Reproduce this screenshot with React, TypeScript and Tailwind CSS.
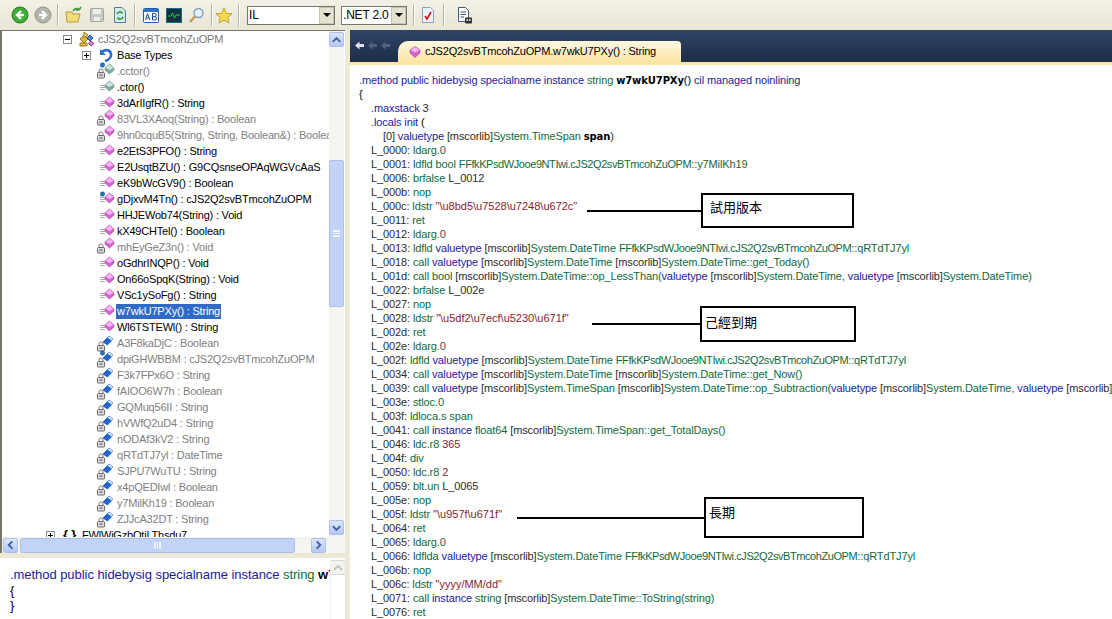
import React from 'react';

const ui = { fontFamily: '"Liberation Sans", Arial, sans-serif' };
const cjk = { fontFamily: '"Noto Sans CJK TC", "Liberation Sans", sans-serif' };
const heavy = { fontFamily: '"DejaVu Sans", Verdana, sans-serif' };

type Kind = 'method' | 'static' | 'lockMethod' | 'ctor' | 'lockCtor' | 'field' | 'staticField';

const members: { name: string; kind: Kind; dim?: boolean; selected?: boolean }[] = [
  { name: '.cctor()', kind: 'lockCtor', dim: true },
  { name: '.ctor()', kind: 'ctor' },
  { name: '3dArIIgfR() : String', kind: 'method' },
  { name: '83VL3XAoq(String) : Boolean', kind: 'lockMethod', dim: true },
  { name: '9hn0cquB5(String, String, Boolean&) : Boolean', kind: 'lockMethod', dim: true },
  { name: 'e2EtS3PFO() : String', kind: 'method' },
  { name: 'E2UsqtBZU() : G9CQsnseOPAqWGVcAaS', kind: 'method' },
  { name: 'eK9bWcGV9() : Boolean', kind: 'method' },
  { name: 'gDjxvM4Tn() : cJS2Q2svBTmcohZuOPM', kind: 'static' },
  { name: 'HHJEWob74(String) : Void', kind: 'method' },
  { name: 'kX49CHTel() : Boolean', kind: 'method' },
  { name: 'mhEyGeZ3n() : Void', kind: 'lockMethod', dim: true },
  { name: 'oGdhrINQP() : Void', kind: 'method' },
  { name: 'On66oSpqK(String) : Void', kind: 'method' },
  { name: 'VSc1ySoFg() : String', kind: 'method' },
  { name: 'w7wkU7PXy() : String', kind: 'method', selected: true },
  { name: 'Wl6TSTEWl() : String', kind: 'method' },
  { name: 'A3F8kaDjC : Boolean', kind: 'field', dim: true },
  { name: 'dpiGHWBBM : cJS2Q2svBTmcohZuOPM', kind: 'staticField', dim: true },
  { name: 'F3k7FPx6O : String', kind: 'field', dim: true },
  { name: 'fAIOO6W7h : Boolean', kind: 'field', dim: true },
  { name: 'GQMuq56II : String', kind: 'field', dim: true },
  { name: 'hVWfQ2uD4 : String', kind: 'field', dim: true },
  { name: 'nODAf3kV2 : String', kind: 'field', dim: true },
  { name: 'qRTdTJ7yl : DateTime', kind: 'field', dim: true },
  { name: 'SJPU7WuTU : String', kind: 'field', dim: true },
  { name: 'x4pQEDIwl : Boolean', kind: 'field', dim: true },
  { name: 'y7MilKh19 : Boolean', kind: 'field', dim: true },
  { name: 'ZJJcA32DT : String', kind: 'field', dim: true },
];

const ffk = 'FFfkKPsdWJooe9NTIwi.cJS2Q2svBTmcohZuOPM';
const dt = '[mscorlib]System.DateTime';

const code = [
  'L_0000: ldarg.0',
  `L_0001: ldfld bool ${ffk}::y7MilKh19`,
  'L_0006: brfalse L_0012',
  'L_000b: nop',
  'L_000c: ldstr "\\u8bd5\\u7528\\u7248\\u672c"',
  'L_0011: ret',
  'L_0012: ldarg.0',
  `L_0013: ldfld valuetype ${dt} ${ffk}::qRTdTJ7yl`,
  `L_0018: call valuetype ${dt} ${dt}::get_Today()`,
  `L_001d: call bool ${dt}::op_LessThan(valuetype ${dt}, valuetype ${dt})`,
  'L_0022: brfalse L_002e',
  'L_0027: nop',
  'L_0028: ldstr "\\u5df2\\u7ecf\\u5230\\u671f"',
  'L_002d: ret',
  'L_002e: ldarg.0',
  `L_002f: ldfld valuetype ${dt} ${ffk}::qRTdTJ7yl`,
  `L_0034: call valuetype ${dt} ${dt}::get_Now()`,
  `L_0039: call valuetype [mscorlib]System.TimeSpan ${dt}::op_Subtraction(valuetype ${dt}, valuetype ${dt})`,
  'L_003e: stloc.0',
  'L_003f: ldloca.s span',
  'L_0041: call instance float64 [mscorlib]System.TimeSpan::get_TotalDays()',
  'L_0046: ldc.r8 365',
  'L_004f: div',
  'L_0050: ldc.r8 2',
  'L_0059: blt.un L_0065',
  'L_005e: nop',
  'L_005f: ldstr "\\u957f\\u671f"',
  'L_0064: ret',
  'L_0065: ldarg.0',
  `L_0066: ldflda valuetype ${dt} ${ffk}::qRTdTJ7yl`,
  'L_006b: nop',
  'L_006c: ldstr "yyyy/MM/dd"',
  'L_0071: call instance string [mscorlib]System.DateTime::ToString(string)',
  'L_0076: ret',
];

// colour one IL line the way the disassembler does
function CodeLine({ text }: { text: string }) {
  const parts = text.split(/(L_[0-9a-f]{4}:?|valuetype|instance|"[^"]*"|\[mscorlib\]|FFfkKPsdWJooe9NTIwi\.cJS2Q2svBTmcohZuOPM| 365$| 2$)/).filter(Boolean);
  return (
    <div className="h-[14px] whitespace-pre text-[#0f6a3c]">
      {parts.map((p, i) => {
        if (/^L_/.test(p) || p === '[mscorlib]') return <span key={i} className="text-[#2c2c2c]">{p}</span>;
        if (p === 'valuetype' || p === 'instance') return <span key={i} className="text-[#1d1a9c]">{p}</span>;
        if (p === ffk) return <span key={i} className="tracking-[-0.42px]">{p}</span>;
        if (p[0] === '"') return <span key={i} className="tracking-normal text-[#8a1c2c]">{p}</span>;
        if (p === ' 365' || p === ' 2') return <span key={i} className="text-[#8a1c2c]">{p}</span>;
        return <span key={i}>{p}</span>;
      })}
    </div>
  );
}

function Gem({ x, y, teal }: { x: number; y: number; teal?: boolean }) {
  const a = teal ? '#7fa9a0' : '#d65fd2';
  const b = teal ? '#4c7f78' : '#8f2f9e';
  const c = teal ? '#cfe3de' : '#f3b5f0';
  return (
    <g>
      <path d={`M${x} ${y + 4}L${x + 4.5} ${y}L${x + 9} ${y + 4}L${x + 9} ${y + 6}L${x + 4.5} ${y + 10}L${x} ${y + 6}Z`} fill={a} stroke={b} strokeWidth="0.5" />
      <path d={`M${x + 0.5} ${y + 4}L${x + 4.5} ${y + 0.5}L${x + 8.5} ${y + 4}L${x + 4.5} ${y + 6}Z`} fill={c} />
    </g>
  );
}

function Lock({ y }: { y: number }) {
  return (
    <g>
      <path d={`M2 ${y + 3.5}V${y + 2}a2 2 0 0 1 4 0V${y + 3.5}`} fill="none" stroke="#777" />
      <rect x="0.5" y={y + 3.5} width="7" height="5.5" rx="1" fill="#dcdcdc" stroke="#666" />
      <path d={`M2.5 ${y + 6}H5.5`} stroke="#444" />
    </g>
  );
}

function Bars() {
  return <path d="M3 6.5H8M3 8.5H8M3 10.5H8" stroke="#ababab" fill="none" />;
}

function Dot({ y }: { y: number }) {
  return <circle cx="5.5" cy={y} r="2.2" fill="#1f77c9" stroke="#0a3d7a" strokeWidth="0.5" />;
}

function FieldGem() {
  return (
    <g>
      <path d="M6 7L12 1L16 4L10.5 10Z" fill="#1f66cf" stroke="#0d3f94" strokeWidth="0.6" />
      <path d="M12 1L16 4L14.5 5.5L10.5 2.8Z" fill="#cfe3fa" />
    </g>
  );
}

function MemberIcon({ kind }: { kind: Kind }) {
  return (
    <svg width="18" height="16" viewBox="0 0 18 16" className="shrink-0 overflow-visible">
      {kind === 'method' && <><Bars /><Gem x={8} y={2} /></>}
      {kind === 'static' && <><Bars /><Dot y={3} /><Gem x={8} y={2} /></>}
      {kind === 'lockMethod' && <><Lock y={5} /><Gem x={8} y={-1} /></>}
      {kind === 'ctor' && <><Bars /><Gem x={8} y={2} teal /></>}
      {kind === 'lockCtor' && <><Lock y={6} /><Dot y={2} /><Gem x={8} y={1} teal /></>}
      {kind === 'field' && <><Lock y={7} /><FieldGem /></>}
      {kind === 'staticField' && <><Lock y={7} /><Dot y={2} /><FieldGem /></>}
    </svg>
  );
}

function Expander({ open }: { open?: boolean }) {
  return (
    <span className="relative block h-[9px] w-[9px] shrink-0 border border-[#8a8a8a] bg-white">
      <span className="absolute left-[1px] top-[3px] h-px w-[5px] bg-black" />
      {!open && <span className="absolute left-[3px] top-[1px] h-[5px] w-px bg-black" />}
    </span>
  );
}

function ScrollBtn({ dir }: { dir: 'up' | 'down' | 'left' | 'right' }) {
  const d = { up: 'M3 9L7 5L11 9', down: 'M3 5L7 9L11 5', left: 'M9 3L5 7L9 11', right: 'M5 3L9 7L5 11' }[dir];
  return (
    <div className="flex h-[15px] w-[15px] shrink-0 items-center justify-center rounded-[2px] border border-[#aebfe8] bg-gradient-to-b from-[#dbe6fb] to-[#b4c9f2]">
      <svg width="14" height="14" viewBox="0 0 14 14"><path d={d} fill="none" stroke="#3f5f9f" strokeWidth="2" /></svg>
    </div>
  );
}

function Sep() {
  return <div className="mx-[3px] h-[22px] w-[2px] shrink-0 border-l border-r border-l-[#b5b2a0] border-r-white" />;
}

function Tool({ children, w = 23 }: { children: React.ReactNode; w?: number }) {
  return <div className="flex h-[24px] shrink-0 items-center justify-center" style={{ width: w }}>{children}</div>;
}

function Combo({ label, w }: { label: string; w: string }) {
  return (
    <div className={`flex h-[19px] shrink-0 items-center justify-between border border-[#77756a] bg-white pl-[1px] text-[12px] text-black ${w}`}>
      <span className="whitespace-nowrap tracking-[-0.2px]">{label}</span>
      <div className="flex h-[17px] w-[15px] shrink-0 items-center justify-center border border-[#c5c2b2] bg-[#e5e2d3]">
        <div className="h-0 w-0 border-x-[4px] border-t-[4px] border-x-transparent border-t-black" />
      </div>
    </div>
  );
}

function Toolbar() {
  return (
    <div className="flex h-[30px] shrink-0 items-center bg-gradient-to-b from-[#f3f1e6] to-[#e9e6d6] pl-[8px]" style={ui}>
      <Tool>
        <svg width="18" height="18" viewBox="0 0 18 18"><circle cx="9" cy="9" r="8" fill="#3fae35" stroke="#2a7d25" /><path d="M10 5L6 9L10 13M6 9H13" stroke="#fff" strokeWidth="2.4" fill="none" /></svg>
      </Tool>
      <Tool>
        <svg width="18" height="18" viewBox="0 0 18 18"><circle cx="9" cy="9" r="8" fill="#b4b4ac" stroke="#96968f" /><path d="M8 5L12 9L8 13M12 9H5" stroke="#fff" strokeWidth="2.4" fill="none" /></svg>
      </Tool>
      <Sep />
      <Tool>
        <svg width="18" height="18" viewBox="0 0 18 18"><path d="M1 6H7L8 8H15L13 16H2Z" fill="#f4dc7c" stroke="#b89a3a" /><path d="M8 5C10 2 13 2 14 4M14 4L16 1M14 4L11 4" stroke="#3a9d35" strokeWidth="1.6" fill="none" /></svg>
      </Tool>
      <Tool>
        <svg width="16" height="16" viewBox="0 0 16 16"><rect x="1.5" y="1.5" width="13" height="13" rx="1" fill="#c9c9c3" stroke="#a5a59f" /><rect x="4" y="2" width="8" height="5" fill="#efefea" /><rect x="5" y="10" width="6" height="4" fill="#efefea" /></svg>
      </Tool>
      <Tool>
        <svg width="14" height="16" viewBox="0 0 14 16"><path d="M1.5 .5H9L12.5 4V15.5H1.5Z" fill="#d5ebf2" stroke="#5a7c90" /><path d="M4 7A3 3 0 0 1 9.5 6.5M10 10A3 3 0 0 1 4.5 10.5" stroke="#2f9c30" strokeWidth="1.6" fill="none" /></svg>
      </Tool>
      <Sep />
      <Tool>
        <svg width="16" height="15" viewBox="0 0 16 15"><rect x=".5" y=".5" width="15" height="14" rx="1" fill="#fff" stroke="#1c5db0" /><rect x="1" y="1" width="14" height="3" fill="#2f73c8" /><path d="M2.5 12L4.6 5.5L6.7 12M3.3 10H5.9" stroke="#1a4f9e" fill="none" /><path d="M9.5 5.5V12H12a1.6 1.6 0 0 0 0-3.3H9.5M9.5 5.5H11.7a1.6 1.6 0 0 1 0 3.2" stroke="#1a4f9e" fill="none" /></svg>
      </Tool>
      <Tool>
        <svg width="16" height="15" viewBox="0 0 16 15"><rect x=".5" y=".5" width="15" height="14" fill="#14323e" stroke="#1a6b8d" /><path d="M2 8H5L6.5 5L8.5 10L10 7H14" stroke="#37c14d" fill="none" /></svg>
      </Tool>
      <Tool>
        <svg width="17" height="17" viewBox="0 0 17 17"><circle cx="10.5" cy="6" r="4.5" fill="#e5f2fb" stroke="#7c9db8" strokeWidth="1.4" /><path d="M7 9.5L2 15" stroke="#c49a55" strokeWidth="2.4" /></svg>
      </Tool>
      <Sep />
      <Tool w={16}>
        <svg width="18" height="17" viewBox="0 0 18 17" className="shrink-0"><path d="M9 1L11.3 6.3L17 6.8L12.7 10.5L14 16L9 13.1L4 16L5.3 10.5L1 6.8L6.7 6.3Z" fill="#f8d84e" stroke="#c79f2c" /></svg>
      </Tool>
      <div className="w-[3px] shrink-0" />
      <Sep />
      <div className="w-[4px] shrink-0" />
      <Combo label="IL" w="w-[88px]" />
      <div className="w-[6px] shrink-0" />
      <Combo label=".NET 2.0" w="w-[66px]" />
      <div className="w-[3px] shrink-0" />
      <Sep />
      <div className="w-[2px] shrink-0" />
      <Tool w={16}>
        <svg width="14" height="16" viewBox="0 0 14 16"><path d="M1.5 .5H9.5L12.5 3.5V15.5H1.5Z" fill="#eef3fa" stroke="#8ba0bd" /><path d="M4 9L6 12L10 5" stroke="#d6232a" strokeWidth="1.8" fill="none" /></svg>
      </Tool>
      <div className="w-[4px] shrink-0" />
      <Sep />
      <div className="w-[9px] shrink-0" />
      <Tool w={16}>
        <svg width="16" height="17" viewBox="0 0 16 17"><path d="M1.5 .5H8.5L11.5 3.5V14.5H1.5Z" fill="#fff" stroke="#3a5a80" /><path d="M3.5 5H9M3.5 7.5H9M3.5 10H7" stroke="#3a5a80" /><rect x="8" y="10.5" width="7" height="6" rx="1" fill="#333" /><rect x="9.5" y="12" width="1.5" height="2" fill="#ddd" /><rect x="12" y="12" width="1.5" height="2" fill="#ddd" /></svg>
      </Tool>
    </div>
  );
}

function TreePane() {
  return (
    <div className="flex h-[507px] shrink-0 border-l-2 border-t border-[#77756a] bg-white" style={ui}>
      <div className="min-w-0 flex-1 overflow-hidden text-[11px] tracking-[-0.2px]">
        <div className="flex h-[16px] items-center text-[#777]">
          <div className="w-[61px]" />
          <Expander open />
          <svg width="17" height="16" viewBox="0 0 17 16" className="ml-[7px] shrink-0">
            <path d="M1 8L5 4L9 8L5 12Z" fill="#e0b93e" stroke="#9a7a1c" />
            <path d="M5 1L9 4L5 7Z" fill="#f2d777" stroke="#9a7a1c" />
            <path d="M1 12H8V15H1Z" fill="#e0b93e" stroke="#9a7a1c" />
            <path d="M11 4L14 7L11 10L8 7Z" fill="#4a86d8" stroke="#1f4d9a" />
            <path d="M12 10L15 12.5L12 15L9.5 12.5Z" fill="#dc7fd8" stroke="#8c3a96" />
          </svg>
          <span className="ml-[2px] whitespace-nowrap">cJS2Q2svBTmcohZuOPM</span>
        </div>
        <div className="flex h-[16px] items-center text-black">
          <div className="w-[80px]" />
          <Expander />
          <svg width="14" height="14" viewBox="0 0 14 14" className="ml-[8px] shrink-0">
            <path d="M2 5C5 1 11 1 12 6C12.5 9 10 12 6 13" fill="none" stroke="#2d6fd0" strokeWidth="2.6" />
            <path d="M1 1V7H7Z" fill="#2d6fd0" />
          </svg>
          <span className="ml-[4px] whitespace-nowrap">Base Types</span>
        </div>
        {members.map((m) => (
          <div key={m.name} className="flex h-[16px] items-center whitespace-nowrap">
            <div className="w-[95px] shrink-0" />
            <MemberIcon kind={m.kind} />
            <span className={`ml-[1px] px-[1px] leading-[15px] ${m.selected ? 'bg-[#316ac5] text-white' : m.dim ? 'text-[#808080]' : 'text-black'}`}>{m.name}</span>
          </div>
        ))}
        <div className="flex h-[16px] items-center whitespace-nowrap text-black">
          <div className="w-[44px]" />
          <Expander />
          <span className="ml-[8px] w-[14px] text-[13px] font-bold">{'{ }'}</span>
          <span className="ml-[5px]">FWlWiGzbOtiLThsdu7</span>
        </div>
      </div>
      <div className="mr-[1px] flex w-[15px] shrink-0 flex-col bg-[#f5f4ef] pb-[2px] pt-[1px]">
        <ScrollBtn dir="up" />
        <div className="h-[113px] shrink-0" />
        <div className="flex h-[147px] shrink-0 items-center justify-center rounded-[2px] border border-[#aebfe8] bg-[#c3d3f5]">
          <div className="h-[7px] w-[7px] border-y-2 border-[#eef3fd] bg-[linear-gradient(#eef3fd,#eef3fd)] bg-[length:100%_1px] bg-center bg-no-repeat" />
        </div>
        <div className="flex-1" />
        <ScrollBtn dir="down" />
      </div>
    </div>
  );
}

function HScroll() {
  return (
    <div className="flex h-[16px] shrink-0 items-center border-l-2 border-[#77756a] bg-[#f5f4ef] pl-[1px] pr-[19px]">
      <ScrollBtn dir="left" />
      <div className="mx-[2px] flex h-[15px] w-[275px] shrink-0 items-center justify-center rounded-[2px] border border-[#aebfe8] bg-[#c3d3f5]">
        <div className="h-[7px] w-[7px] border-x-2 border-[#eef3fd] bg-[linear-gradient(#eef3fd,#eef3fd)] bg-[length:1px_100%] bg-center bg-no-repeat" />
      </div>
      <div className="flex-1" />
      <ScrollBtn dir="right" />
    </div>
  );
}

function PreviewPane() {
  return (
    <div className="mt-[5px] flex min-h-0 flex-1 bg-white" style={ui}>
      <div className="min-w-0 flex-1 overflow-hidden whitespace-nowrap pl-[10px] pt-[9px] text-[13px] leading-[15.5px] tracking-[-0.05px] text-black">
        <div>
          <span className="text-[#1d1a9c]">.method public hidebysig specialname instance </span>
          <span className="text-[#0f6a3c]">string </span>
          <span className="font-bold">w7wkU7PXy</span>
        </div>
        <div>{'{'}</div>
        <div>{'}'}</div>
      </div>
      <div className="w-[15px] shrink-0 border-l border-[#eeeeea] pt-[2px]">
        <div className="flex h-[15px] items-center justify-center border-y border-[#d8d8d2] bg-[#f3f3ee]">
          <svg width="10" height="8" viewBox="0 0 10 8"><path d="M1 6L5 2L9 6" fill="none" stroke="#c6c6c0" strokeWidth="2" /></svg>
        </div>
      </div>
    </div>
  );
}

function Note({ label, className, boxClass, lineClass }: { label: string; className: string; boxClass: string; lineClass: string }) {
  return (
    <div className={`absolute flex items-center ${className}`}>
      <div className={`h-[2px] bg-black ${lineClass}`} />
      <div className={`border-2 border-black bg-white text-[13px] leading-[18px] text-black ${boxClass}`} style={cjk}>{label}</div>
    </div>
  );
}

function NavArrow({ bright }: { bright?: boolean }) {
  return (
    <svg width="9" height="9" viewBox="0 0 9 9" className="shrink-0">
      <path d="M0 4.5L4.5 0.5V3H9V6H4.5V8.5Z" fill={bright ? '#dfe4ec' : '#51617f'} />
    </svg>
  );
}

function CodePane() {
  return (
    <div className="relative flex min-w-0 flex-1 flex-col overflow-hidden border-l border-[#f6ecc8] bg-white" style={ui}>
      <div className="flex h-[32px] shrink-0 items-end bg-gradient-to-b from-[#2f4465] to-[#1e2d48] pl-[5px]">
        <div className="mb-[12px] flex w-[43px] shrink-0 items-center gap-[4px]">
          <NavArrow bright />
          <NavArrow />
          <NavArrow />
        </div>
        <div className="flex h-[21px] w-[283px] shrink-0 items-center rounded-tl-[10px] rounded-tr-[4px] bg-gradient-to-b from-[#fff8e2] to-[#fbe5a4] pl-[11px] text-[11px] tracking-[-0.2px] text-black">
          <svg width="12" height="12" viewBox="0 0 12 12" className="mr-[4px] shrink-0">
            <path d="M1 4L6 .5L11 4V7L6 11.5L1 7Z" fill="#d65fd2" stroke="#8f2f9e" strokeWidth="0.5" />
            <path d="M1.5 4L6 1L10.5 4L6 6.5Z" fill="#f3b5f0" />
          </svg>
          <span className="whitespace-nowrap">cJS2Q2svBTmcohZuOPM.w7wkU7PXy() : String</span>
        </div>
      </div>
      <div className="h-[3px] shrink-0 bg-[#fbe5a4]" />
      <div className="min-h-0 flex-1 pl-[9px] pt-[8px] text-[11px] leading-[14px] tracking-[-0.11px]">
        <div className="h-[14px] whitespace-pre text-[#1d1a9c]">
          .method public hidebysig specialname instance <span className="text-[#0f6a3c]">string</span>{' '}
          <span className="text-[10px] font-bold text-black" style={heavy}>w7wkU7PXy</span><span className="text-black">()</span> cil managed noinlining
        </div>
        <div className="h-[14px] text-black">{'{'}</div>
        <div className="pl-[12px]">
          <div className="h-[14px] text-[#1d1a9c]">.maxstack <span className="text-[#2c2c2c]">3</span></div>
          <div className="h-[14px] text-[#1d1a9c]">.locals init <span className="text-black">(</span></div>
          <div className="h-[14px] whitespace-pre pl-[12px] text-[#2c2c2c]">
            [0] <span className="text-[#1d1a9c]">valuetype</span> [mscorlib]<span className="text-[#0f6a3c]">System.TimeSpan</span> <span className="text-[10px] font-bold text-black" style={heavy}>span</span>)
          </div>
          {code.map((line) => <CodeLine key={line} text={line} />)}
        </div>
      </div>
      <Note label="試用版本" className="left-[237px] top-[163px]" lineClass="w-[114px]" boxClass="h-[35px] w-[153px] pl-[7px] pt-[3px]" />
      <Note label="己經到期" className="left-[242px] top-[276px]" lineClass="w-[108px]" boxClass="h-[36px] w-[156px] pl-[3px] pt-[5px]" />
      <Note label="長期" className="left-[167px] top-[467px]" lineClass="w-[187px]" boxClass="h-[41px] w-[160px] pl-[3px] pt-[4px]" />
    </div>
  );
}

export default function App() {
  return (
    <div className="flex h-[619px] w-[1112px] flex-col overflow-hidden bg-[#ece9d8]">
      <Toolbar />
      <div className="flex min-h-0 flex-1">
        <div className="flex w-[345px] shrink-0 flex-col">
          <TreePane />
          <HScroll />
          <PreviewPane />
        </div>
        <div className="w-[4px] shrink-0" />
        <CodePane />
      </div>
    </div>
  );
}
